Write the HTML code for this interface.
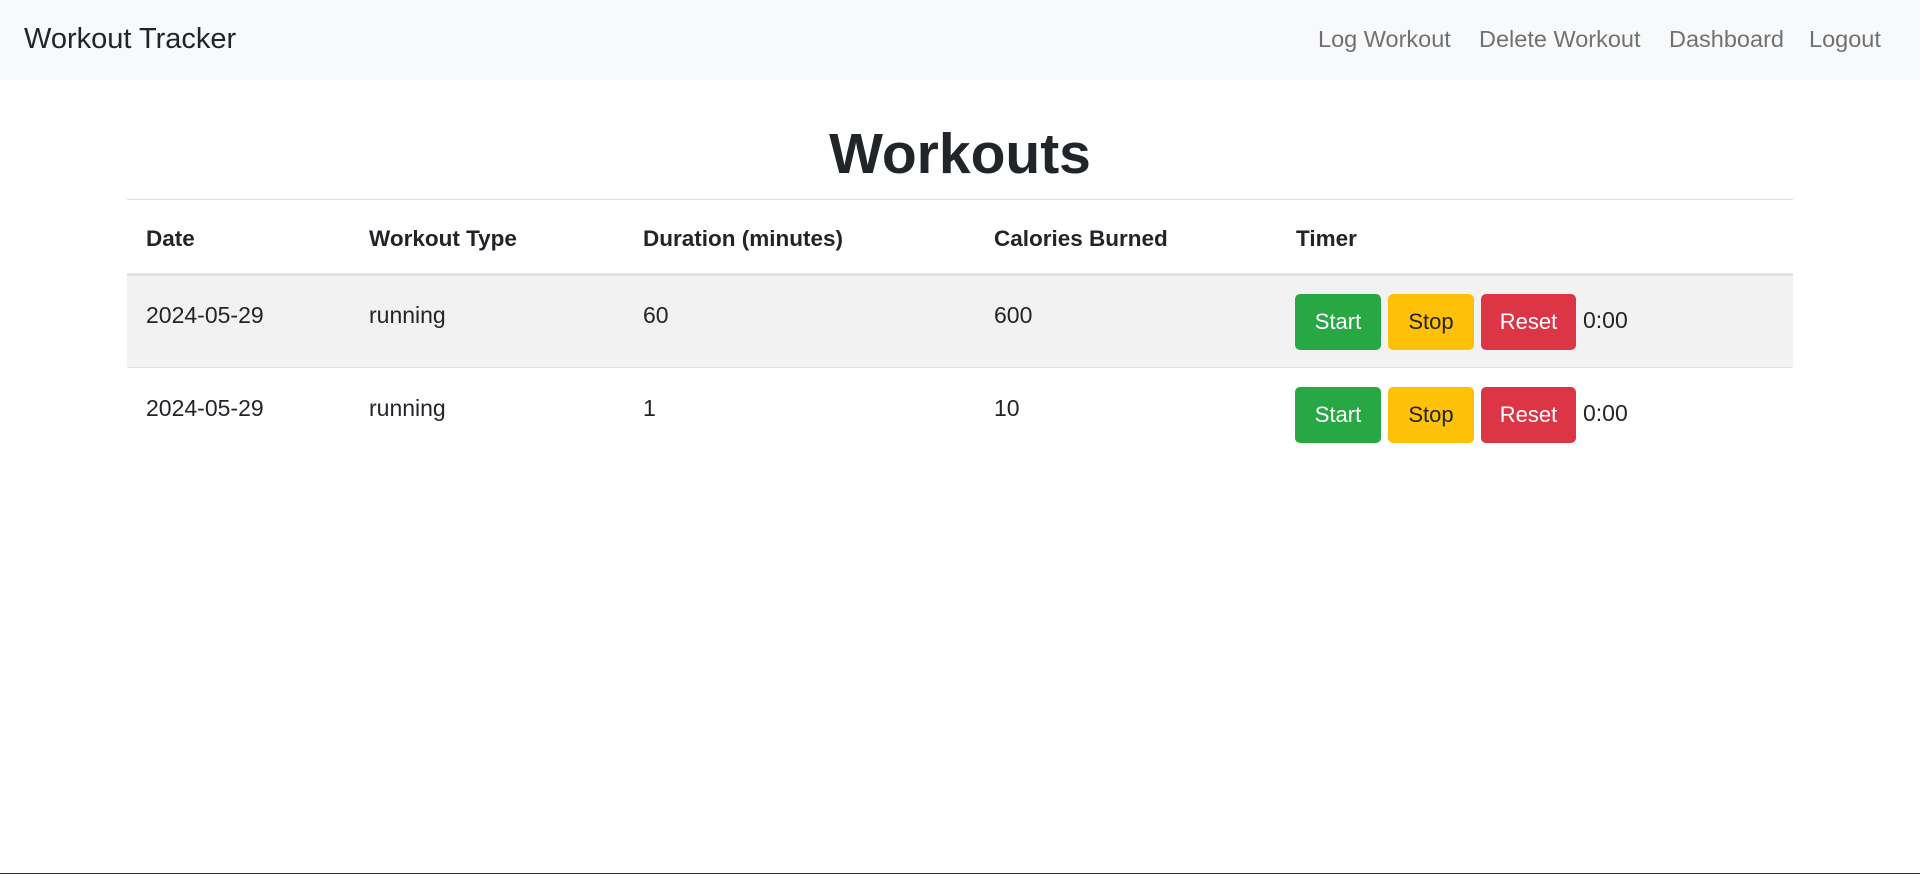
<!DOCTYPE html>
<html><head><meta charset="utf-8"><style>
*{margin:0;padding:0;box-sizing:border-box}
body{width:1920px;height:874px;overflow:hidden;background:#fff;font-family:"Liberation Sans",sans-serif;color:#212529;position:relative}
.nav{position:absolute;left:0;top:0;width:1920px;height:80px;background:#f8f9fa}
.brand{position:absolute;left:24px;top:22px;font-size:29px;color:#212529;line-height:34px}
.link{position:absolute;top:25px;font-size:23.5px;color:rgba(0,0,0,.55);line-height:28px;white-space:nowrap}
h1{position:absolute;left:0;width:1920px;text-align:center;top:119px;font-size:57px;font-weight:bold;line-height:70px}
.t{position:absolute;font-size:23px;line-height:26px;white-space:nowrap}
.b{font-weight:bold;font-size:22.5px}
.line{position:absolute;left:127px;width:1666px}
.btn{position:absolute;height:56px;border-radius:5px;font-size:22px;line-height:56px;text-align:center}
.g{background:#28a745;color:#fff;width:86px;left:1295px}
.y{background:#ffc107;color:#212529;width:86px;left:1388px}
.r{background:#dc3545;color:#fff;width:95px;left:1481px}
</style></head><body>
<div class="nav">
<div class="brand">Workout Tracker</div>
<div class="link" style="left:1318px">Log Workout</div>
<div class="link" style="left:1479px">Delete Workout</div>
<div class="link" style="left:1669px">Dashboard</div>
<div class="link" style="left:1809px">Logout</div>
</div>
<h1>Workouts</h1>
<div class="line" style="top:199px;height:1px;background:#dee2e6"></div>
<div class="t b" style="left:146px;top:226px">Date</div>
<div class="t b" style="left:369px;top:226px">Workout Type</div>
<div class="t b" style="left:643px;top:226px">Duration (minutes)</div>
<div class="t b" style="left:994px;top:226px">Calories Burned</div>
<div class="t b" style="left:1296px;top:226px">Timer</div>
<div class="line" style="top:273px;height:3px;background:#dee2e6"></div>
<div class="line" style="top:276px;height:91px;background:#f2f2f2"></div>
<div class="line" style="top:367px;height:1px;background:#dee2e6"></div>
<div class="t" style="left:146px;top:302px">2024-05-29</div>
<div class="t" style="left:369px;top:302px">running</div>
<div class="t" style="left:643px;top:302px">60</div>
<div class="t" style="left:994px;top:302px">600</div>
<div class="btn g" style="top:294px">Start</div>
<div class="btn y" style="top:294px">Stop</div>
<div class="btn r" style="top:294px">Reset</div>
<div class="t" style="left:1583px;top:307px">0:00</div>
<div class="t" style="left:146px;top:395px">2024-05-29</div>
<div class="t" style="left:369px;top:395px">running</div>
<div class="t" style="left:643px;top:395px">1</div>
<div class="t" style="left:994px;top:395px">10</div>
<div class="btn g" style="top:387px">Start</div>
<div class="btn y" style="top:387px">Stop</div>
<div class="btn r" style="top:387px">Reset</div>
<div class="t" style="left:1583px;top:400px">0:00</div>
<div style="position:absolute;left:0;top:873px;width:1920px;height:1px;background:#333"></div>
</body></html>
